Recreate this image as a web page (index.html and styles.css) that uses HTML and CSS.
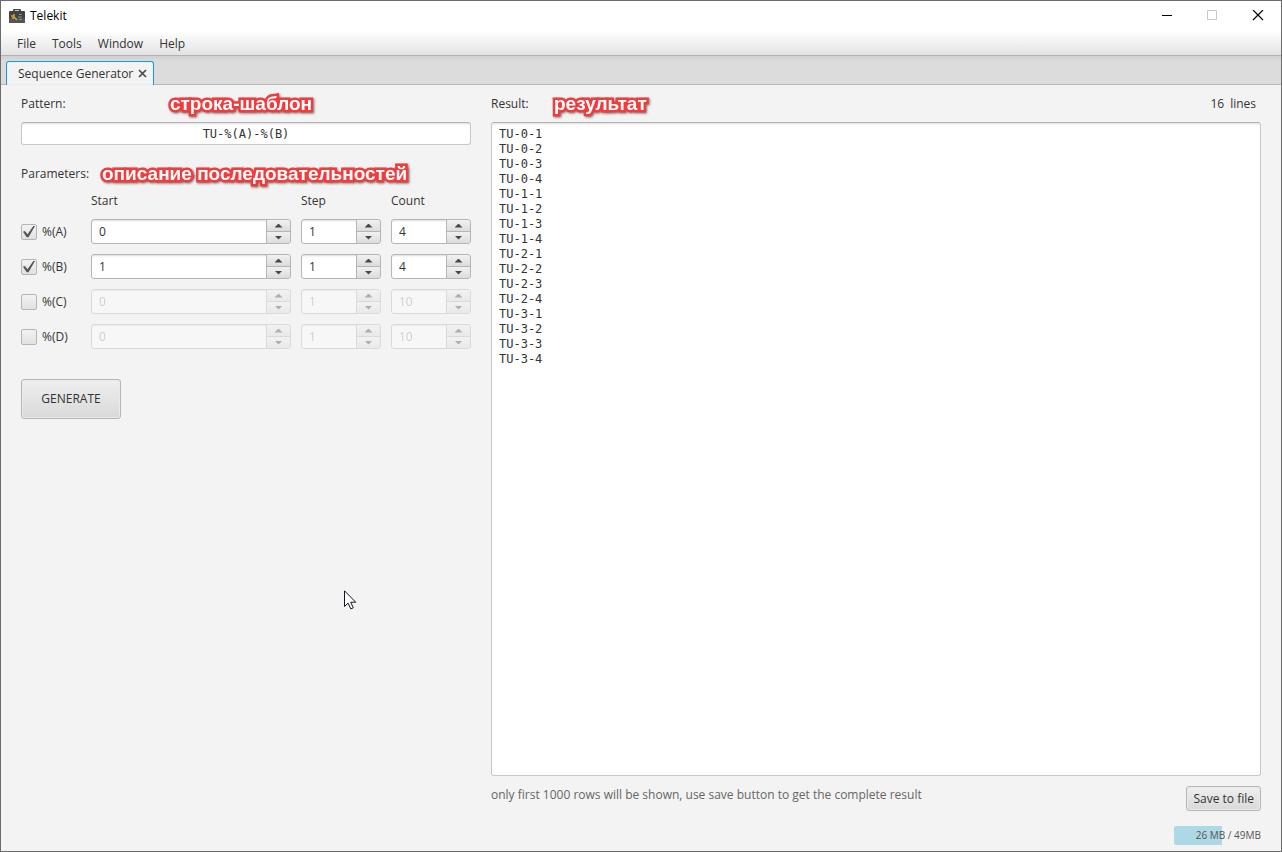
FILE: index.html
```html
<!DOCTYPE html>
<html lang="en">
<head>
<meta charset="utf-8">
<title>Telekit</title>
<link rel="stylesheet" href="styles.css">
</head>
<body>
<div class="window">
  <header class="titlebar">
    <svg class="logo" width="16" height="14" viewBox="0 0 16 14" aria-hidden="true">
      <rect x="4" y="0" width="8" height="3" rx="1" fill="#4a4a4c"/>
      <rect x="0" y="2" width="16" height="12" rx="1" fill="#414244"/>
      <rect x="0" y="9" width="16" height="5" rx="1" fill="#545557"/>
      <rect x="6" y="1" width="4" height="1" fill="#c4c4c4"/>
      <path d="M2 7h3.500M5 5v3l3 3M4 8v2" fill="none" stroke="#e09a27" stroke-width="1.600"/>
      <path d="M10 5.500h3M9 8h4M10 10.500h3" stroke="#8e8e8e"/>
    </svg>
    <span class="title">Telekit</span>
    <div class="controls">
      <button class="control" aria-label="Minimize"><svg width="12" height="12" viewBox="0 0 12 12"><path d="M2 5.500h10" stroke="#000"/></svg></button>
      <button class="control" aria-label="Maximize" disabled><svg width="12" height="12" viewBox="0 0 12 12"><path d="M1.500 .5h9v9h-9z" fill="none" stroke="#c8c8c8"/></svg></button>
      <button class="control" aria-label="Close"><svg width="12" height="12" viewBox="0 0 12 12"><path d="M1 0l10 10M11 0L1 10" stroke="#000" stroke-width="1.200"/></svg></button>
    </div>
  </header>
  <nav class="menubar">
    <button class="menu">File</button>
    <button class="menu">Tools</button>
    <button class="menu">Window</button>
    <button class="menu">Help</button>
  </nav>
  <div class="tabs">
    <div class="tab">
      <span>Sequence Generator</span>
      <button class="tab-close" aria-label="Close tab"><svg width="9" height="9" viewBox="0 0 9 9"><path d="M1 1l7 7M8 1L1 8" stroke="#4a4a4a" stroke-width="1.700"/></svg></button>
    </div>
  </div>
  <main class="content">
    <section class="setup">
      <div class="head">
        <label for="pattern">Pattern:</label>
        <span class="note note-pattern" lang="ru">строка-шаблон</span>
      </div>
      <input class="field pattern" id="pattern" value="TU-%(A)-%(B)">
      <div class="head head-params">
        <span>Parameters:</span>
        <span class="note note-params" lang="ru">описание последовательностей</span>
      </div>
      <div class="params">
        <span class="col-start">Start</span><span>Step</span><span>Count</span>

        <label class="param"><input type="checkbox" checked>%(A)</label>
        <div class="spinner"><input aria-label="Start A" value="0"><div class="arrows"><button aria-label="Increase"></button><button aria-label="Decrease"></button></div></div>
        <div class="spinner"><input aria-label="Step A" value="1"><div class="arrows"><button aria-label="Increase"></button><button aria-label="Decrease"></button></div></div>
        <div class="spinner"><input aria-label="Count A" value="4"><div class="arrows"><button aria-label="Increase"></button><button aria-label="Decrease"></button></div></div>

        <label class="param"><input type="checkbox" checked>%(B)</label>
        <div class="spinner"><input aria-label="Start B" value="1"><div class="arrows"><button aria-label="Increase"></button><button aria-label="Decrease"></button></div></div>
        <div class="spinner"><input aria-label="Step B" value="1"><div class="arrows"><button aria-label="Increase"></button><button aria-label="Decrease"></button></div></div>
        <div class="spinner"><input aria-label="Count B" value="4"><div class="arrows"><button aria-label="Increase"></button><button aria-label="Decrease"></button></div></div>

        <label class="param"><input type="checkbox">%(C)</label>
        <div class="spinner off"><input aria-label="Start C" value="0" disabled><div class="arrows"><button aria-label="Increase" disabled></button><button aria-label="Decrease" disabled></button></div></div>
        <div class="spinner off"><input aria-label="Step C" value="1" disabled><div class="arrows"><button aria-label="Increase" disabled></button><button aria-label="Decrease" disabled></button></div></div>
        <div class="spinner off"><input aria-label="Count C" value="10" disabled><div class="arrows"><button aria-label="Increase" disabled></button><button aria-label="Decrease" disabled></button></div></div>

        <label class="param"><input type="checkbox">%(D)</label>
        <div class="spinner off"><input aria-label="Start D" value="0" disabled><div class="arrows"><button aria-label="Increase" disabled></button><button aria-label="Decrease" disabled></button></div></div>
        <div class="spinner off"><input aria-label="Step D" value="1" disabled><div class="arrows"><button aria-label="Increase" disabled></button><button aria-label="Decrease" disabled></button></div></div>
        <div class="spinner off"><input aria-label="Count D" value="10" disabled><div class="arrows"><button aria-label="Increase" disabled></button><button aria-label="Decrease" disabled></button></div></div>
      </div>
      <button class="button generate">GENERATE</button>
    </section>
    <section class="output">
      <div class="head">
        <label for="result">Result:</label>
        <span class="note note-result" lang="ru">результат</span>
        <span class="count"><span>16</span><span>lines</span></span>
      </div>
      <textarea class="field result" id="result" spellcheck="false">TU-0-1
TU-0-2
TU-0-3
TU-0-4
TU-1-1
TU-1-2
TU-1-3
TU-1-4
TU-2-1
TU-2-2
TU-2-3
TU-2-4
TU-3-1
TU-3-2
TU-3-3
TU-3-4</textarea>
      <div class="actions">
        <span class="hint">only first 1000 rows will be shown, use save button to get the complete result</span>
        <button class="button save">Save to file</button>
      </div>
    </section>
  </main>
  <footer class="status">
    <div class="memory">26 MB / 49MB</div>
  </footer>
  <svg class="cursor" width="13" height="20" viewBox="0 0 13 20" aria-hidden="true"><path d="M.5 .8v15.700l3.600-3.400 2.700 5.800 2.500-1.100-2.600-5.600h5z" fill="#fff" stroke="#15151f"/></svg>
</div>
</body>
</html>
```
FILE: styles.css
```css
* { box-sizing: border-box; }

body {
  margin: 0;
  font: 12px/18px "Open Sans", "Noto Sans", sans-serif;
  color: #333;
}

button, input, textarea { font: inherit; color: inherit; margin: 0; }
button { padding: 0; border: 0; background: none; }

.window {
  position: relative;
  display: flex;
  flex-direction: column;
  min-height: 100vh;
  border: 1px solid #6b6b6b;
  background: #f3f3f3;
}

.titlebar {
  display: flex;
  align-items: center;
  height: 30px;
  padding-left: 8px;
  gap: 5px;
  background: #fff;
  color: #000;
}
.controls { display: flex; margin-left: auto; }
.control { display: grid; place-items: center; width: 46px; height: 28px; }

.menubar {
  display: flex;
  height: 25px;
  padding: 2px 8px 0;
  background: linear-gradient(#fff, #e3e3e3);
  border-bottom: 1px solid #b2b2b2;
}
.menu { padding: 0 8px; }

.tabs {
  display: flex;
  height: 29px;
  padding: 5px 5px 0;
  background: linear-gradient(#cfcfcf, #dcdcdc 5px);
  border-bottom: 1px solid #b8b8b8;
}
.tab {
  display: flex;
  align-items: center;
  gap: 5px;
  height: 24px;
  padding: 0 6px 0 11px;
  background: #f3f3f3;
  border: 1px solid #1c9dc7;
  border-bottom: 0;
  border-radius: 3px 3px 0 0;
  box-shadow: inset 0 0 0 1px #e4f2f7;
}
.tab-close { display: flex; }

.content {
  flex: 1;
  display: grid;
  grid-template-columns: 450px minmax(0, 1fr);
  gap: 20px;
  padding: 0 20px;
}
.setup, .output { display: flex; flex-direction: column; }

.head {
  position: relative;
  display: flex;
  align-items: center;
  height: 37px;
}
.head-params { margin-top: 10px; }
.count { display: flex; gap: 6px; margin-left: auto; padding-right: 5px; }

.note {
  position: absolute;
  top: 8px;
  font: bold 19px/22px "Liberation Sans", Arial, sans-serif;
  color: #fff;
  white-space: nowrap;
  -webkit-text-stroke: 5px #f03c3c;
  paint-order: stroke fill;
  filter: drop-shadow(1px 1px 1px #777);
}
.note-pattern { left: 149px; }
.note-params { left: 81px; }
.note-result { left: 63px; }

.field {
  border: 1px solid #c8c8c8;
  border-top-color: #b5b5b5;
  border-radius: 3px;
  background: #fff;
  box-shadow: inset 0 2px 2px -1px #ddd;
  font: 12px/15px "DejaVu Sans Mono", monospace;
  outline: 0;
}
.pattern { height: 23px; padding: 0 7px; text-align: center; }
.result { flex: 1; padding: 4px 7px; resize: none; }

.params {
  display: grid;
  grid-template-columns: 60px 200px 80px 80px;
  grid-template-rows: 17px;
  gap: 10px;
}
.col-start { grid-column: 2; }
.param { display: flex; align-items: center; gap: 5px; }
.param input {
  appearance: none;
  display: grid;
  place-items: center;
  width: 16px;
  height: 16px;
  border: 1px solid #b5b5b5;
  border-radius: 2px;
  background: linear-gradient(#f2f2f2, #e1e1e1);
}
.param input:checked::before {
  content: "";
  width: 12px;
  height: 12px;
  background: #555;
  clip-path: polygon(0 53%, 15% 46%, 38% 72%, 86% 4%, 100% 4%, 46% 97%, 31% 97%);
}

.spinner {
  display: flex;
  height: 25px;
  border: 1px solid #b5b5b5;
  border-radius: 3px;
  background: #fff;
  box-shadow: inset 0 2px 2px -1px #ddd;
  overflow: hidden;
}
.spinner input {
  flex: 1;
  min-width: 0;
  padding: 0 7px;
  border: 0;
  background: none;
  outline: 0;
}
.arrows {
  display: grid;
  grid-template-rows: 1fr 1fr;
  gap: 1px;
  width: 24px;
  border-left: 1px solid #b5b5b5;
  background: #b5b5b5;
}
.arrows button {
  display: grid;
  place-items: center;
  background: linear-gradient(#f1f1f1, #dcdcdc);
}
.arrows button::before {
  content: "";
  width: 8px;
  height: 4px;
  background: #484848;
  clip-path: polygon(50% 0, 100% 100%, 0 100%);
}
.arrows button + button::before { clip-path: polygon(0 0, 100% 0, 50% 100%); }
.off { opacity: .4; }
.off input { color: #999; }

.button {
  border: 1px solid #b5b5b5;
  border-radius: 3px;
  background: linear-gradient(#efefef, #d9d9d9);
  box-shadow: inset 0 0 0 1px #ebebeb;
}
.generate { width: 100px; height: 40px; margin-top: 30px; }

.actions {
  display: flex;
  justify-content: space-between;
  align-items: flex-start;
  margin-top: 10px;
}
.hint { color: #666; }
.save { height: 25px; padding: 0 6px; }

.status { display: flex; justify-content: flex-end; padding: 15px 20px 6px; }
.memory {
  width: 87px;
  font-size: 10px;
  line-height: 19px;
  text-align: right;
  white-space: nowrap;
  color: #555;
  border-radius: 2px;
  background: linear-gradient(90deg, #add8e6 55%, transparent 55%);
}

.cursor { position: absolute; left: 343px; top: 589px; }
```
